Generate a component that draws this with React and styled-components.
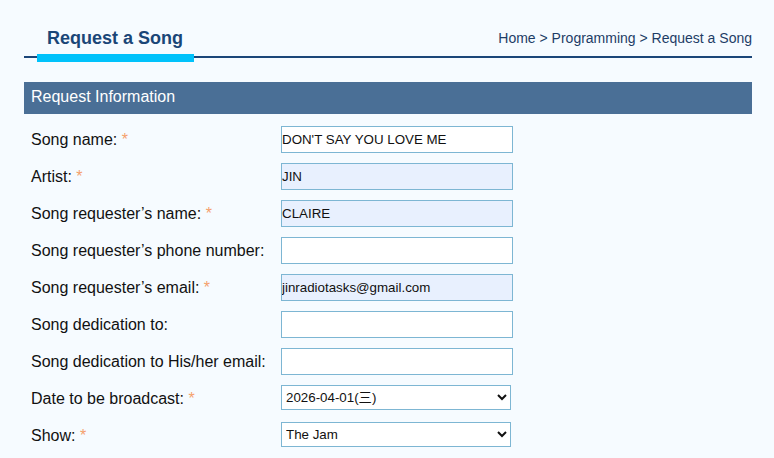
import React from "react";
import styled, { createGlobalStyle } from "styled-components";

const GlobalStyle = createGlobalStyle`
  html, body {
    margin: 0;
    padding: 0;
    background: #f6fbff;
  }
  body {
    font-family: "Liberation Sans", Arial, sans-serif;
    color: #111;
  }
`;

const Page = styled.div`
  padding: 27px 22px 0 24px;
`;

const Header = styled.div`
  display: flex;
  justify-content: space-between;
  align-items: flex-start;
  border-bottom: 2px solid #1b4679;
`;

const Title = styled.h1`
  margin: 0 0 -6px 13px;
  padding: 0 11px 5px 10px;
  font-size: 18px;
  line-height: 22px;
  font-weight: bold;
  color: #1a4677;
  border-bottom: 8px solid #00c2fb;
  position: relative;
`;

const Breadcrumb = styled.div`
  margin-top: 2px;
  font-size: 14px;
  line-height: 18px;
  color: #1e3d66;
`;

const SectionHeader = styled.div`
  margin-top: 24px;
  padding: 6px 7px 8px;
  font-size: 16px;
  line-height: 18px;
  color: #fff;
  background: #4a6f96;
`;

const Form = styled.div`
  display: grid;
  grid-template-columns: 257px 1fr;
  grid-auto-rows: 37px;
  margin-top: 7px;
`;

const Label = styled.div`
  align-self: center;
  padding-left: 7px;
  font-size: 16px;
  line-height: 18px;
  color: #111;
`;

const Req = styled.span`
  color: #f5a06c;
`;

const Control = styled.div`
  align-self: start;
  margin-top: 5px;
`;

const Input = styled.input`
  box-sizing: border-box;
  width: 232px;
  height: 27px;
  margin: 0;
  padding: 0;
  border: 1px solid #7db6d3;
  border-radius: 0;
  outline: none;
  font-family: "Liberation Sans", Arial, sans-serif;
  font-size: 13.333px;
  color: #111;
  background: ${(p) => (p.$filled ? "#e8f0fe" : "#fff")};
`;

const Select = styled.select`
  box-sizing: border-box;
  width: 230px;
  height: 25px;
  margin: 0;
  padding: 0;
  border: 1px solid #7db6d3;
  border-radius: 0;
  font-family: "Liberation Sans", "Noto Sans CJK SC", Arial, sans-serif;
  font-size: 13.333px;
  color: #111;
  background: #fff;
`;

const rows = [
  { label: "Song name:", req: true, value: "DON'T SAY YOU LOVE ME" },
  { label: "Artist:", req: true, value: "JIN", filled: true },
  { label: "Song requester\u2019s name:", req: true, value: "CLAIRE", filled: true },
  { label: "Song requester\u2019s phone number:", value: "" },
  { label: "Song requester\u2019s email:", req: true, value: "jinradiotasks@gmail.com", filled: true },
  { label: "Song dedication to:", value: "" },
  { label: "Song dedication to His/her email:", value: "" },
];

export default function App() {
  return (
    <>
      <GlobalStyle />
      <Page>
        <Header>
          <Title>Request a Song</Title>
          <Breadcrumb>Home &gt; Programming &gt; Request a Song</Breadcrumb>
        </Header>
        <SectionHeader>Request Information</SectionHeader>
        <Form>
          {rows.map((r) => (
            <React.Fragment key={r.label}>
              <Label>
                {r.label}
                {r.req && <Req> *</Req>}
              </Label>
              <Control>
                <Input type="text" defaultValue={r.value} $filled={r.filled} />
              </Control>
            </React.Fragment>
          ))}
          <Label>
            Date to be broadcast:<Req> *</Req>
          </Label>
          <Control>
            <Select defaultValue="2026-04-01">
              <option value="2026-04-01">2026-04-01(三)</option>
            </Select>
          </Control>
          <Label>
            Show:<Req> *</Req>
          </Label>
          <Control>
            <Select defaultValue="jam">
              <option value="jam">The Jam</option>
            </Select>
          </Control>
        </Form>
      </Page>
    </>
  );
}
